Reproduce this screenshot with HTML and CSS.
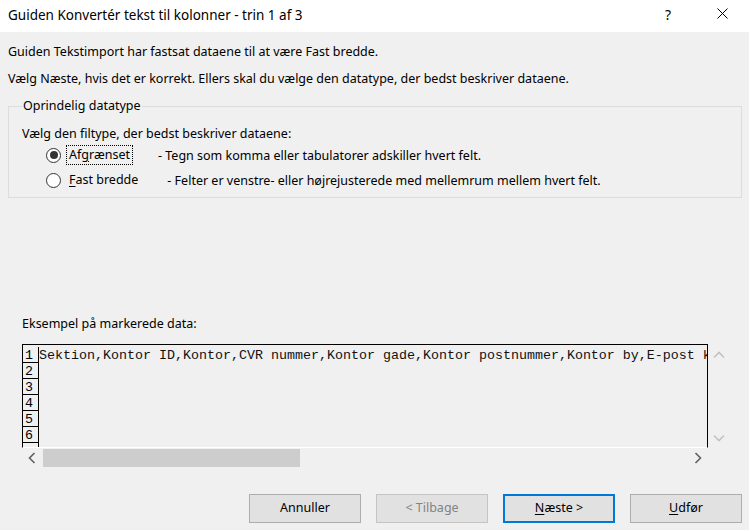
FILE: index.html
```html
<!DOCTYPE html>
<html lang="da">
<head>
<meta charset="utf-8">
<title>Guiden Konvertér tekst til kolonner</title>
<link rel="stylesheet" href="styles.css">
</head>
<body>
<div class="dialog">
  <div class="titlebar">
    <span class="title">Guiden Konvertér tekst til kolonner - trin 1 af 3</span>
    <span class="help">?</span>
    <span class="close">
      <svg width="11" height="11" viewBox="0 0 11 11"><path d="M0.5 0.5 L10.5 10.5 M10.5 0.5 L0.5 10.5" stroke="#000" stroke-width="1" fill="none"/></svg>
    </span>
  </div>
  <div class="content">
    <p class="msg msg-first">Guiden Tekstimport har fastsat dataene til at være Fast bredde.</p>
    <p class="msg msg-second">Vælg Næste, hvis det er korrekt. Ellers skal du vælge den datatype, der bedst beskriver dataene.</p>

    <fieldset class="group">
      <legend class="legend">Oprindelig datatype</legend>
      <div class="prompt">Vælg den filtype, der bedst beskriver dataene:</div>
      <div class="option">
        <span class="radio checked"></span>
        <span class="label focused">Af<u>g</u>rænset</span>
        <span class="desc desc-first">- Tegn som komma eller tabulatorer adskiller hvert felt.</span>
      </div>
      <div class="option">
        <span class="radio"></span>
        <span class="label"><u>F</u>ast bredde</span>
        <span class="desc desc-second">- Felter er venstre- eller højrejusterede med mellemrum mellem hvert felt.</span>
      </div>
    </fieldset>

    <div class="preview-label">Eksempel på markerede data:</div>
    <div class="preview">
      <div class="preview-top">
        <div class="data-area">
          <div class="row"><span class="num">1</span><span class="cell">Sektion,Kontor ID,Kontor,CVR nummer,Kontor gade,Kontor postnummer,Kontor by,E-post k</span></div>
          <div class="row"><span class="num">2</span><span class="cell"></span></div>
          <div class="row"><span class="num">3</span><span class="cell"></span></div>
          <div class="row"><span class="num">4</span><span class="cell"></span></div>
          <div class="row"><span class="num">5</span><span class="cell"></span></div>
          <div class="row"><span class="num">6</span><span class="cell"></span></div>
          <div class="row row-partial"><span class="num"></span><span class="cell"></span></div>
        </div>
        <div class="vscroll">
          <span class="varrow">
            <svg width="12" height="8" viewBox="0 0 12 8"><path d="M1 6.5 L6 1.5 L11 6.5" stroke="#c2c2c2" stroke-width="1.6" fill="none"/></svg>
          </span>
          <span class="varrow">
            <svg width="12" height="8" viewBox="0 0 12 8"><path d="M1 1.5 L6 6.5 L11 1.5" stroke="#c2c2c2" stroke-width="1.6" fill="none"/></svg>
          </span>
        </div>
      </div>
      <div class="hscroll">
        <span class="harrow">
          <svg width="8" height="12" viewBox="0 0 8 12"><path d="M6.5 1 L1.5 6 L6.5 11" stroke="#606060" stroke-width="1.6" fill="none"/></svg>
        </span>
        <span class="track"><span class="thumb"></span></span>
        <span class="harrow">
          <svg width="8" height="12" viewBox="0 0 8 12"><path d="M1.5 1 L6.5 6 L1.5 11" stroke="#606060" stroke-width="1.6" fill="none"/></svg>
        </span>
      </div>
    </div>

    <div class="buttons">
      <button class="btn">Annuller</button>
      <button class="btn btn-disabled">&lt; Tilbage</button>
      <button class="btn btn-default"><u>N</u>æste &gt;</button>
      <button class="btn"><u>U</u>dfør</button>
    </div>
  </div>
</div>
</body>
</html>
```

FILE: styles.css
```css
* {
  box-sizing: border-box;
}

html, body {
  margin: 0;
  padding: 0;
  width: 749px;
  height: 530px;
  overflow: hidden;
}

body {
  font-family: "Noto Sans", "Open Sans", sans-serif;
  font-size: 12.5px;
  color: #000;
  background: #f0f0f0;
}

.dialog {
  width: 749px;
  height: 530px;
  display: flex;
  flex-direction: column;
  background: #f0f0f0;
}

.titlebar {
  height: 32px;
  flex: none;
  background: #fff;
  display: flex;
  align-items: center;
  padding-left: 8px;
}

.title {
  font-size: 13.5px;
  flex: 1;
  padding-bottom: 2px;
}

.help {
  font-size: 14px;
  width: 11px;
  margin-right: 41px;
  padding-bottom: 3px;
}

.close {
  width: 11px;
  height: 11px;
  margin-right: 21px;
  display: flex;
  margin-bottom: 5px;
}

.content {
  flex: 1;
  display: flex;
  flex-direction: column;
  padding: 0 7px 0 8px;
}

.msg {
  margin: 0;
  line-height: 16px;
}

.msg-first {
  margin-top: 12px;
}

.msg-second {
  margin-top: 11px;
}

.group {
  margin: 11px 0 0 0;
  padding: 0 0 0 13px;
  border: 1px solid #dcdcdc;
  height: 100px;
  min-width: 0;
  width: 734px;
}

.legend {
  padding: 0 1px;
  margin-left: 0;
  line-height: 16px;
}

.prompt {
  line-height: 16px;
  margin-top: 12px;
}

.option {
  display: flex;
  align-items: center;
  height: 20px;
  margin-top: 3px;
}

.option + .option {
  margin-top: 5px;
}

.radio {
  width: 15px;
  height: 15px;
  border: 1px solid #333;
  border-radius: 50%;
  background: #fff;
  margin-left: 24px;
  display: flex;
  align-items: center;
  justify-content: center;
}

.radio.checked::after {
  content: "";
  width: 8px;
  height: 8px;
  border-radius: 50%;
  background: #333;
}

.label {
  margin-left: 5px;
  padding: 1px 2px;
  border: 1px solid transparent;
  line-height: 16px;
}

.label.focused {
  border: 1px dotted #000;
}

.desc-first {
  margin-left: 25px;
}

.desc-second {
  margin-left: 26px;
}

.preview-label {
  margin-top: 118px;
  margin-left: 14px;
  line-height: 16px;
}

.preview {
  margin-top: 12px;
  margin-left: 14px;
  width: 707px;
  display: flex;
  flex-direction: column;
}

.preview-top {
  display: flex;
}

.data-area {
  width: 686px;
  height: 104px;
  border-top: 1px solid #000;
  border-left: 1px solid #000;
  border-right: 1px solid #000;
  border-bottom: 1px solid #fff;
  overflow: hidden;
  padding-top: 2px;
  font-family: "Liberation Mono", "Courier New", monospace;
  font-size: 13.333px;
}

.row {
  display: flex;
  height: 16px;
}

.num {
  width: 16px;
  flex: none;
  border-right: 1px solid #000;
  border-bottom: 1px solid #000;
  padding-left: 2px;
  line-height: 17px;
}

.row-partial .num {
  border-bottom: none;
}

.cell {
  white-space: nowrap;
  line-height: 17px;
  color: #111;
}

.vscroll {
  width: 21px;
  height: 104px;
  display: flex;
  flex-direction: column;
  justify-content: space-between;
  align-items: center;
  padding: 7px 0 6px 0;
}

.varrow {
  display: flex;
}

.hscroll {
  width: 686px;
  height: 20px;
  display: flex;
  align-items: center;
}

.harrow {
  width: 20px;
  height: 20px;
  display: flex;
  align-items: center;
  justify-content: center;
}

.track {
  flex: 1;
  height: 18px;
  margin: 0 1px;
  display: flex;
}

.thumb {
  width: 257px;
  height: 18px;
  background: #cdcdcd;
}

.buttons {
  margin-top: 26px;
  display: flex;
  justify-content: flex-end;
  gap: 15px;
}

.btn {
  width: 112px;
  height: 29px;
  background: #e1e1e1;
  border: 1px solid #adadad;
  font-family: "Noto Sans", "Open Sans", sans-serif;
  font-size: 12.5px;
  color: #000;
  padding: 0 0 2px 0;
  margin: 0;
}

.btn-disabled {
  background: #e1e1e1;
  border-color: #c4c4c4;
  color: #838383;
}

.btn-default {
  border: 2px solid #0078d7;
}

u {
  text-decoration: underline;
  text-underline-offset: 2px;
}
```
